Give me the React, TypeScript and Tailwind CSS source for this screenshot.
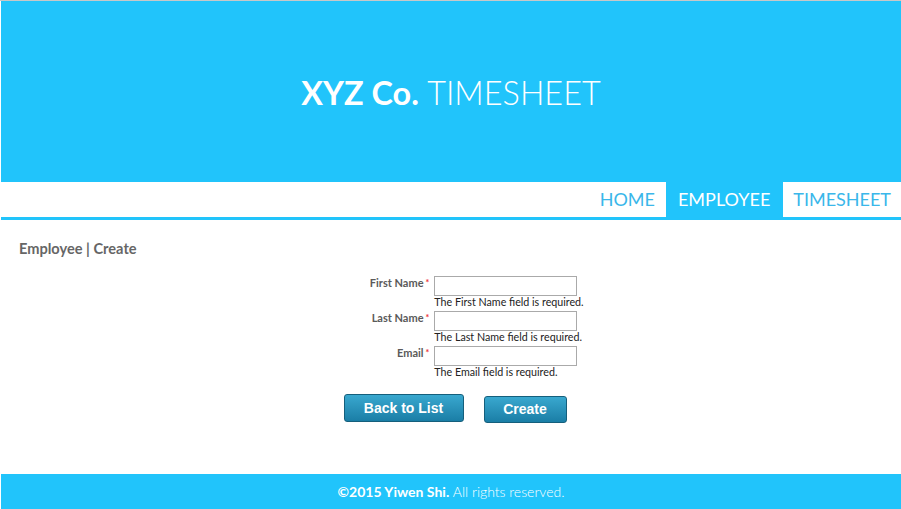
import React from "react";

const Field = ({ label, msg }: { label: string; msg: string }) => (
  <div className="flex h-[35px]">
    <div className="w-[93px] pr-[5px] text-right text-[11px] leading-[14px] font-bold text-[#5a5a5a]">
      {label}
      <span className="ml-[2px] align-top text-[9px] text-[#e33]">*</span>
    </div>
    <div className="flex flex-col">
      <input className="h-[20px] w-[143px] border border-[#aaa] bg-white outline-none" />
      <div className="mt-0 text-[10.7px] leading-[12px] text-[#222]">{msg}</div>
    </div>
  </div>
);

export default function App() {
  return (
    <div className="w-[901px] h-[509px] bg-white flex flex-col" style={{ fontFamily: "Lato, 'Open Sans', sans-serif" }}>
      <div className="h-[1px] bg-[#c8c8c8]" />
      <div className="flex-1 flex flex-col pl-[1px]">
        <header className="h-[181px] bg-[#21c4fb] flex items-center justify-center pt-[4px]">
          <h1 className="text-[32.4px] text-white leading-none">
            <span className="font-bold">XYZ Co.</span>{" "}
            <span className="font-light">TIMESHEET</span>
          </h1>
        </header>
        <nav className="h-[35px] flex justify-end text-[18px] border-b-[3px] border-[#21c4fb] box-content">
          <a className="px-[11px] flex items-center text-[#3ab7ea]">HOME</a>
          <a className="pl-[12px] pr-[13px] flex items-center bg-[#21c4fb] text-white">EMPLOYEE</a>
          <a className="px-[10px] flex items-center text-[#3ab7ea]">TIMESHEET</a>
        </nav>
        <main className="flex-1 px-[18px] pt-[20px]">
          <div className="text-[14.6px] leading-[18px] font-bold text-[#666]">Employee | Create</div>
          <div className="mt-[18px] flex justify-center">
            <div className="ml-[23px] flex flex-col">
              <Field label="First Name" msg="The First Name field is required." />
              <Field label="Last Name" msg="The Last Name field is required." />
              <Field label="Email" msg="The Email field is required." />
            </div>
          </div>
          <div className="mt-[13px] flex justify-center gap-[20px] pl-[8px]" style={{ fontFamily: "'Liberation Sans', Arial, sans-serif" }}>
            <button className="w-[120px] h-[28px] rounded-[3px] border border-[#155f7c] bg-gradient-to-b from-[#39a8cf] to-[#1a7ea6] text-white text-[14px] font-bold">Back to List</button>
            <button className="w-[83px] h-[27px] mt-[2px] rounded-[3px] border border-[#155f7c] bg-gradient-to-b from-[#39a8cf] to-[#1a7ea6] text-white text-[14px] font-bold">Create</button>
          </div>
        </main>
        <footer className="h-[35px] bg-[#21c4fb] flex items-center justify-center text-white text-[14px]">
          <span className="font-bold">©2015 Yiwen Shi.</span>&nbsp;<span className="font-light">All rights reserved.</span>
        </footer>
      </div>
    </div>
  );
}
